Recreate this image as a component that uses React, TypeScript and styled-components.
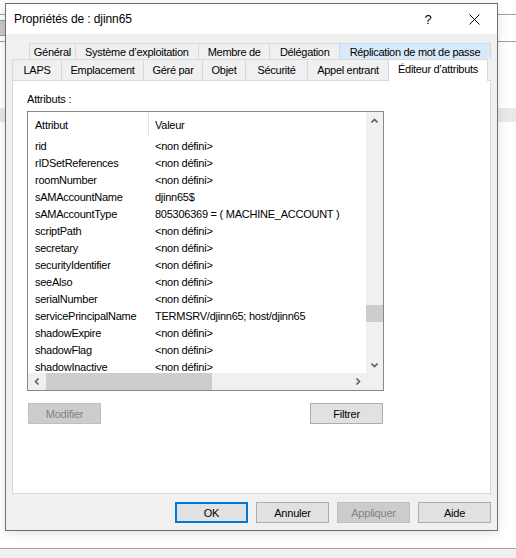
import styled, { createGlobalStyle } from 'styled-components';

const GlobalStyle = createGlobalStyle`
  html, body {
    margin: 0;
    padding: 0;
  }
  body {
    background: #fff;
    font-family: "Liberation Sans", Arial, sans-serif;
    color: #000;
  }
`;

// background window (the ADUC console behind the dialog)
const Screen = styled.div`
  position: relative;
  width: 516px;
  height: 558px;
  overflow: hidden;
  background: #fff;
  display: flex;
  flex-direction: column;
`;

const BgTitle = styled.div`
  height: 14px;
  border-bottom: 1px solid #a0a0a0;
`;

const BgToolbar = styled.div`
  height: 26px;
  border-bottom: 1px solid #a0a0a0;
  display: flex;
  align-items: center;
`;

const BgIcon = styled.div`
  width: 15px;
  height: 14px;
  margin-left: -10px;
  background: #c9c9c9;
  border: 1px solid #9a9a9a;
`;

const BgList = styled.div`
  flex: 1;
  padding-top: 66px;
`;

const BgSelectedRow = styled.div`
  height: 14px;
  background: #e9e9e9;
`;

const BgStatus = styled.div`
  height: 9px;
  border-top: 1px solid #a0a0a0;
  background: #f0f0f0;
`;

// dialog
const Dialog = styled.div`
  position: absolute;
  left: 5px;
  top: 3px;
  width: 493px;
  height: 528px;
  box-sizing: border-box;
  border: 1px solid #707070;
  background: #f0f0f0;
  display: flex;
  flex-direction: column;
  box-shadow: 0 2px 10px rgba(0, 0, 0, 0.12);
`;

const TitleBar = styled.div`
  height: 30px;
  flex-shrink: 0;
  background: #fff;
  display: flex;
  align-items: center;
  padding-left: 8px;
`;

const TitleText = styled.div`
  flex: 1;
  font-size: 12px;
  letter-spacing: -0.1px;
`;

const TitleButton = styled.div`
  width: 46px;
  height: 30px;
  display: flex;
  align-items: center;
  justify-content: center;
  font-size: 13px;
`;

const Body = styled.div`
  flex: 1;
  display: flex;
  flex-direction: column;
  padding: 9px 6px 7px 6px;
`;

const TabRow = styled.div<{ $indent: number; $height: number }>`
  display: flex;
  height: ${(p) => p.$height}px;
  padding-left: ${(p) => p.$indent}px;
`;

const Tab = styled.div<{ $width: number; $hover?: boolean; $selected?: boolean }>`
  position: relative;
  box-sizing: border-box;
  width: ${(p) => p.$width}px;
  height: ${(p) => (p.$selected ? 'calc(100% + 1px)' : '100%')};
  margin-left: -1px;
  &:first-child {
    margin-left: 0;
  }
  border: 1px solid ${(p) => (p.$hover ? '#c3dcf1' : '#d9d9d9')};
  border-bottom: none;
  background: ${(p) => (p.$selected ? '#fff' : p.$hover ? '#d8eaf9' : '#f0f0f0')};
  z-index: ${(p) => (p.$selected ? 2 : p.$hover ? 1 : 0)};
  display: flex;
  align-items: center;
  justify-content: center;
  padding-bottom: ${(p) => (p.$selected ? 3 : 0)}px;
  font-size: 11px;
  letter-spacing: -0.3px;
  white-space: nowrap;
`;

const Panel = styled.div`
  box-sizing: border-box;
  height: 414px;
  border: 1px solid #d9d9d9;
  background: #fff;
  padding: 12px 0 0 14px;
  display: flex;
  flex-direction: column;
`;

const FieldLabel = styled.div`
  font-size: 11px;
  letter-spacing: -0.2px;
  line-height: 13px;
  margin-bottom: 5px;
`;

const ListBox = styled.div`
  box-sizing: border-box;
  width: 357px;
  height: 280px;
  border: 1px solid #828790;
  background: #fff;
  display: grid;
  grid-template-columns: 338px 17px;
  grid-template-rows: 261px 17px;
`;

const ListContent = styled.div`
  overflow: hidden;
  font-size: 11px;
  letter-spacing: -0.25px;
`;

const HeaderRow = styled.div`
  display: flex;
  height: 25px;
`;

const HeaderCell = styled.div<{ $width?: number }>`
  box-sizing: border-box;
  width: ${(p) => (p.$width ? `${p.$width}px` : 'auto')};
  flex: ${(p) => (p.$width ? 'none' : 1)};
  padding-left: ${(p) => (p.$width ? 7 : 6)}px;
  border-right: ${(p) => (p.$width ? '1px solid #e5e5e5' : 'none')};
  display: flex;
  align-items: center;
`;

const Row = styled.div`
  display: flex;
  height: 17px;
  align-items: center;
  white-space: nowrap;
`;

const Cell = styled.div<{ $width?: number }>`
  box-sizing: border-box;
  width: ${(p) => (p.$width ? `${p.$width}px` : 'auto')};
  flex: none;
  padding-left: 7px;
`;

const VScroll = styled.div`
  background: #f0f0f0;
  display: flex;
  flex-direction: column;
`;

const HScroll = styled.div`
  background: #f0f0f0;
  display: flex;
`;

const ScrollCorner = styled.div`
  background: #f0f0f0;
`;

const ArrowCell = styled.div`
  width: 17px;
  height: 17px;
  flex: none;
  display: flex;
  align-items: center;
  justify-content: center;
`;

const Track = styled.div`
  flex: 1;
  display: flex;
`;

const VThumb = styled.div<{ $offset: number }>`
  margin-top: ${(p) => p.$offset}px;
  width: 17px;
  height: 17px;
  background: #cdcdcd;
`;

const HThumb = styled.div<{ $offset: number; $size: number }>`
  margin-left: ${(p) => p.$offset}px;
  width: ${(p) => p.$size}px;
  height: 17px;
  background: #cdcdcd;
`;

const PanelButtons = styled.div`
  width: 356px;
  margin-top: 12px;
  padding-left: 1px;
  box-sizing: border-box;
  display: flex;
  justify-content: space-between;
`;

const DialogButtons = styled.div`
  margin-top: 8px;
  display: flex;
  justify-content: flex-end;
  gap: 8px;
`;

const Button = styled.div<{ $primary?: boolean; $disabled?: boolean }>`
  box-sizing: border-box;
  width: 73px;
  height: 21px;
  display: flex;
  align-items: center;
  justify-content: center;
  font-size: 11px;
  letter-spacing: -0.2px;
  background: ${(p) => (p.$disabled ? '#cccccc' : '#e1e1e1')};
  color: ${(p) => (p.$disabled ? '#838383' : '#000')};
  border: ${(p) =>
    p.$primary ? '2px solid #0078d7' : p.$disabled ? '1px solid #bfbfbf' : '1px solid #adadad'};
`;

const Chevron = ({ dir }: { dir: 'up' | 'down' | 'left' | 'right' }) => {
  const pts = {
    up: '0.5,4.5 3.5,1.5 6.5,4.5',
    down: '0.5,1.5 3.5,4.5 6.5,1.5',
    left: '4.5,0.5 1.5,3.5 4.5,6.5',
    right: '1.5,0.5 4.5,3.5 1.5,6.5',
  }[dir];
  const vertical = dir === 'up' || dir === 'down';
  return (
    <svg width={vertical ? 7 : 6} height={vertical ? 6 : 7} viewBox={vertical ? '0 0 7 6' : '0 0 6 7'}>
      <polyline points={pts} fill="none" stroke="#606060" strokeWidth="1.6" />
    </svg>
  );
};

const CloseIcon = () => (
  <svg width="11" height="11" viewBox="0 0 11 11">
    <line x1="0.5" y1="0.5" x2="10.5" y2="10.5" stroke="#000" strokeWidth="1" />
    <line x1="10.5" y1="0.5" x2="0.5" y2="10.5" stroke="#000" strokeWidth="1" />
  </svg>
);

const backTabs = [
  { label: 'Général', width: 47 },
  { label: 'Système d’exploitation', width: 125 },
  { label: 'Membre de', width: 73 },
  { label: 'Délégation', width: 71 },
  { label: 'Réplication de mot de passe', width: 153, hover: true },
];

const frontTabs = [
  { label: 'LAPS', width: 50 },
  { label: 'Emplacement', width: 83 },
  { label: 'Géré par', width: 60 },
  { label: 'Objet', width: 44 },
  { label: 'Sécurité', width: 63 },
  { label: 'Appel entrant', width: 82 },
  { label: 'Éditeur d’attributs', width: 100, selected: true },
];

const UNSET = '<non défini>';

const attributes: [string, string][] = [
  ['rid', UNSET],
  ['rIDSetReferences', UNSET],
  ['roomNumber', UNSET],
  ['sAMAccountName', 'djinn65$'],
  ['sAMAccountType', '805306369 = ( MACHINE_ACCOUNT )'],
  ['scriptPath', UNSET],
  ['secretary', UNSET],
  ['securityIdentifier', UNSET],
  ['seeAlso', UNSET],
  ['serialNumber', UNSET],
  ['servicePrincipalName', 'TERMSRV/djinn65; host/djinn65'],
  ['shadowExpire', UNSET],
  ['shadowFlag', UNSET],
  ['shadowInactive', UNSET],
];

const App = () => {
  return (
    <>
      <GlobalStyle />
      <Screen>
        <BgTitle />
        <BgToolbar>
          <BgIcon />
        </BgToolbar>
        <BgList>
          <BgSelectedRow />
        </BgList>
        <BgStatus />

        <Dialog>
          <TitleBar>
            <TitleText>Propriétés de : djinn65</TitleText>
            <TitleButton>?</TitleButton>
            <TitleButton>
              <CloseIcon />
            </TitleButton>
          </TitleBar>
          <Body>
            <TabRow $indent={17} $height={16}>
              {backTabs.map((t) => (
                <Tab key={t.label} $width={t.width} $hover={t.hover}>
                  {t.label}
                </Tab>
              ))}
            </TabRow>
            <TabRow $indent={0} $height={21}>
              {frontTabs.map((t) => (
                <Tab key={t.label} $width={t.width} $selected={t.selected}>
                  {t.label}
                </Tab>
              ))}
            </TabRow>
            <Panel>
              <FieldLabel>Attributs :</FieldLabel>
              <ListBox>
                <ListContent>
                  <HeaderRow>
                    <HeaderCell $width={121}>Attribut</HeaderCell>
                    <HeaderCell>Valeur</HeaderCell>
                  </HeaderRow>
                  {attributes.map(([name, value]) => (
                    <Row key={name}>
                      <Cell $width={120}>{name}</Cell>
                      <Cell>{value}</Cell>
                    </Row>
                  ))}
                </ListContent>
                <VScroll>
                  <ArrowCell>
                    <Chevron dir="up" />
                  </ArrowCell>
                  <Track>
                    <VThumb $offset={176} />
                  </Track>
                  <ArrowCell>
                    <Chevron dir="down" />
                  </ArrowCell>
                </VScroll>
                <HScroll>
                  <ArrowCell>
                    <Chevron dir="left" />
                  </ArrowCell>
                  <Track>
                    <HThumb $offset={1} $size={166} />
                  </Track>
                  <ArrowCell>
                    <Chevron dir="right" />
                  </ArrowCell>
                </HScroll>
                <ScrollCorner />
              </ListBox>
              <PanelButtons>
                <Button $disabled>Modifier</Button>
                <Button>Filtrer</Button>
              </PanelButtons>
            </Panel>
            <DialogButtons>
              <Button $primary>OK</Button>
              <Button>Annuler</Button>
              <Button $disabled>Appliquer</Button>
              <Button>Aide</Button>
            </DialogButtons>
          </Body>
        </Dialog>
      </Screen>
    </>
  );
};

export default App;
